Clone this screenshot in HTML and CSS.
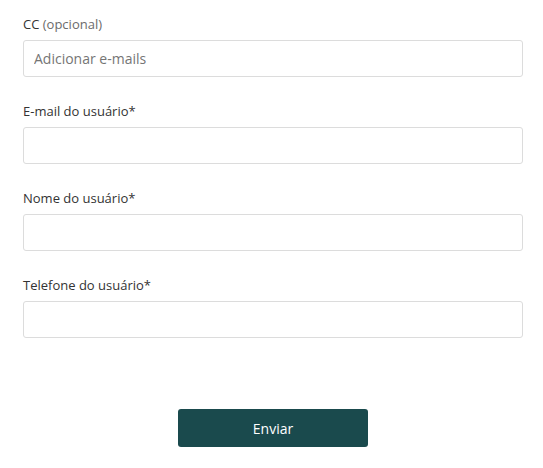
FILE: index.html
```html
<!DOCTYPE html>
<html lang="pt">
<head>
<meta charset="utf-8">
<link rel="stylesheet" href="styles.css">
</head>
<body>
<form class="form">
  <div class="field">
    <label class="label">CC <span class="optional">(opcional)</span></label>
    <input class="input" type="text" placeholder="Adicionar e-mails">
  </div>
  <div class="field">
    <label class="label">E-mail do usuário*</label>
    <input class="input" type="text">
  </div>
  <div class="field">
    <label class="label">Nome do usuário*</label>
    <input class="input" type="text">
  </div>
  <div class="field">
    <label class="label">Telefone do usuário*</label>
    <input class="input" type="text">
  </div>
  <div class="actions">
    <button class="button" type="button">Enviar</button>
  </div>
</form>
</body>
</html>
```
FILE: styles.css
```css
* { box-sizing: border-box; }
html, body { margin: 0; background: #fff; }
body { font-family: "Open Sans", "Liberation Sans", sans-serif; color: #333; }
.form {
  width: 500px;
  margin-left: 23px;
  padding-top: 15px;
  display: flex;
  flex-direction: column;
  gap: 25px;
}
.field { display: flex; flex-direction: column; }
.label {
  font-size: 13px;
  line-height: 18px;
  margin-bottom: 7px;
  color: #333;
}
.optional { color: #6b6b6b; }
.input {
  height: 37px;
  border: 1px solid #dcdcdc;
  border-radius: 3px;
  padding: 0 10px;
  font-family: inherit;
  font-size: 14px;
  color: #333;
  outline: none;
}
.input::placeholder { color: #757575; }
.actions {
  display: flex;
  justify-content: center;
  margin-top: 46px;
}
.button {
  width: 190px;
  height: 38px;
  background: #1a4a4d;
  color: #fff;
  border: none;
  border-radius: 3px;
  font-family: inherit;
  font-size: 14px;
}
```
